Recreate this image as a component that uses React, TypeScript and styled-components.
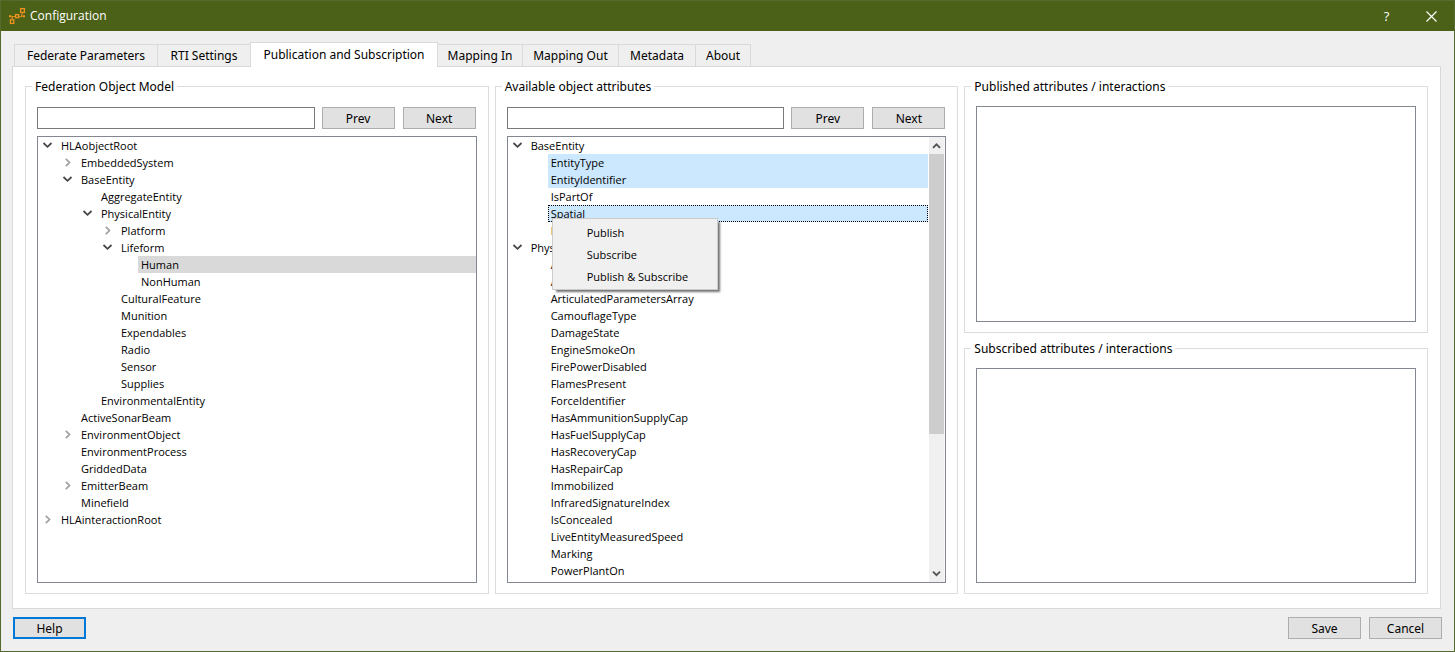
import React from 'react';
import styled, { createGlobalStyle, css } from 'styled-components';

const LABEL_FONT = '"Noto Sans", Tahoma, sans-serif';
const ITEM_FONT = '"Open Sans", "Segoe UI", sans-serif';

const GlobalStyle = createGlobalStyle`
  *, *::before, *::after { box-sizing: border-box; }
  body { margin: 0; background: #efefef; color: #000; font: 12px/16px ${LABEL_FONT}; }
  button, input { font: inherit; color: inherit; }
  ul { list-style: none; margin: 0; padding: 0; }
`;

const Window = styled.div`
  display: flex;
  flex-direction: column;
  min-height: 100vh;
  border: 1px solid #566a2d;
  background: #efefef;
`;

const TitleBar = styled.header`
  display: flex;
  align-items: center;
  height: 30px;
  padding-left: 8px;
  background: #4a6117;
  color: #fff;
`;

const Title = styled.h1`
  flex: 1;
  margin: 0 0 0 4px;
  font: 12px/16px ${ITEM_FONT};
`;

const CaptionButton = styled.button`
  display: flex;
  align-items: center;
  justify-content: center;
  width: 45px;
  height: 30px;
  padding: 0;
  border: 0;
  background: transparent;
  color: #fff;
  font: 13px/16px ${ITEM_FONT};
`;

const Content = styled.main`
  display: flex;
  flex: 1;
  flex-direction: column;
  padding: 11px 13px 0 11px;
`;

const TabBar = styled.div`
  display: flex;
  align-items: flex-end;
  height: 24px;
  padding-left: 2px;
`;

const Tab = styled.button<{ $width: number; $active?: boolean }>`
  width: ${p => p.$width}px;
  height: 22px;
  margin-right: -1px;
  padding: 1px 0 0;
  border: 1px solid #d9d9d9;
  border-bottom: 0;
  background: #efefef;
  white-space: nowrap;
  line-height: 16px;
  ${p => p.$active && css`
    position: relative;
    z-index: 1;
    height: 25px;
    margin-bottom: -1px;
    padding-bottom: 1px;
    background: #fff;
  `}
`;

const TabPanel = styled.section`
  display: grid;
  flex: 1;
  grid-template-columns: repeat(3, minmax(0, 1fr));
  gap: 6px;
  padding: 12px 12px 14px;
  border: 1px solid #d9d9d9;
  background: #fff;
`;

const Column = styled.div`
  display: flex;
  flex-direction: column;
  gap: 8px;
`;

const Group = styled.fieldset`
  display: flex;
  flex: 1;
  flex-direction: column;
  gap: 7px;
  min-width: 0;
  margin: 0;
  padding: 12px 11px 10px;
  border: 1px solid #dcdcdc;
`;

const Legend = styled.legend`
  margin-left: -5px;
  padding: 0 3px;
  line-height: 15px;
`;

const SearchRow = styled.div`
  display: flex;
  gap: 6px;
  padding: 1px 1px 0 0;
`;

const SearchInput = styled.input`
  flex: 1;
  min-width: 0;
  height: 22px;
  padding: 0 4px;
  border: 1px solid #7a7a7a;
  border-radius: 0;
  background: #fff;
`;

const PushButton = styled.button<{ $primary?: boolean }>`
  width: 73px;
  height: 22px;
  padding: 1px 0 0;
  border: ${p => (p.$primary ? '2px solid #0078d7' : '1px solid #adadad')};
  background: #e1e1e1;
  line-height: 16px;
  ${SearchRow} & { margin-left: 1px; }
  ${SearchRow} & + & { margin-left: 2px; }
`;

const ListBox = styled.div`
  display: flex;
  flex: 1;
  border: 1px solid #828790;
  background: #fff;
  font: 11px/17px ${ITEM_FONT};
`;

const Tree = styled.ul`
  flex: 1;
  min-width: 0;
`;

const TreeRow = styled.li<{ $level: number }>`
  position: relative;
  display: flex;
  height: 17px;
  padding-left: ${p => p.$level * 20}px;
`;

const Expander = styled.span`
  display: flex;
  flex: none;
  align-items: center;
  width: 20px;
  height: 17px;
  padding-left: 4px;
`;

type Mark = 'selected' | 'focused' | 'inactive';

const TreeLabel = styled.span<{ $mark?: Mark }>`
  flex: 1;
  padding-left: 3px;
  white-space: nowrap;
  background: ${p => (p.$mark === 'inactive' ? '#d9d9d9' : p.$mark ? '#cce8ff' : 'transparent')};
  ${p => p.$mark === 'focused' && css`
    outline: 1px dotted #000;
    outline-offset: -1px;
  `}
`;

const ContextMenu = styled.div`
  position: absolute;
  z-index: 2;
  top: 13px;
  left: 44px;
  display: flex;
  flex-direction: column;
  width: 166px;
  padding: 2px;
  border: 1px solid #ccc;
  background: #f0f0f0;
  box-shadow: 3px 3px 2px -1px rgba(0, 0, 0, 0.55);
`;

const MenuItem = styled.button`
  height: 22px;
  padding: 0 0 0 32px;
  border: 0;
  background: transparent;
  text-align: left;
`;

const ScrollBar = styled.div`
  display: flex;
  flex-direction: column;
  width: 16px;
  margin-left: 1px;
  border-right: 1px solid #fafafa;
  background: #f0f0f0;
`;

const ScrollArrow = styled.button`
  display: flex;
  align-items: center;
  justify-content: center;
  height: 17px;
  padding: 0;
  border: 0;
  background: transparent;
`;

const ScrollTrack = styled.div`
  flex: 1;
`;

const ScrollThumb = styled.div`
  height: calc(100% * 15 / 22);
  background: #cdcdcd;
`;

const Footer = styled.footer`
  display: flex;
  gap: 8px;
  padding: 8px 0 12px 1px;
  margin-right: -1px;
`;

const Spacer = styled.span`
  flex: 1;
`;

const Logo = () => (
  <svg width="17" height="18" viewBox="0 0 17 18" fill="none" stroke="#f0921e" aria-hidden="true">
    <rect x="11.6" y="1.6" width="3.8" height="3.8" strokeWidth="1.3" />
    <rect x="6.6" y="7.6" width="3" height="3" strokeWidth="1.3" />
    <rect x="1.4" y="12.8" width="3.4" height="3.6" strokeWidth="1.3" />
    <path d="M1 9.2H3L4 9.9L6.6 9M3.2 12.8V10M9.6 9L11.6 9.9L13 9.2H15M13.2 5.4V7L12 9.4" />
    <path d="M0 8.2h2v2h-2zM14 8.2h2v2h-2z" fill="#f0921e" stroke="none" />
  </svg>
);

const Chevron = ({ open }: { open: boolean }) => (
  <svg width="11" height="11" viewBox="0 0 11 11" fill="none" strokeWidth={open ? 1.8 : 1.7} aria-hidden="true">
    {open ? <path d="M1.5 3L5.5 6.8L9.5 3" stroke="#484848" /> : <path d="M3.8 1.8L7.5 5.5L3.8 9.2" stroke="#a0a0a0" />}
  </svg>
);

const ScrollChevron = ({ up }: { up?: boolean }) => (
  <svg width="9" height="9" viewBox="0 0 9 9" fill="none" stroke="#555" strokeWidth="1.9" aria-hidden="true">
    <path d={up ? 'M1 6.8L4.5 3.3L8 6.8' : 'M1 2.7L4.5 6.2L8 2.7'} />
  </svg>
);

interface Item {
  name: string;
  level: number;
  open?: boolean;
  mark?: Mark;
  menu?: boolean;
}

const leaves = (level: number, names: string[]): Item[] => names.map(name => ({ name, level }));

const objectModel: Item[] = [
  { name: 'HLAobjectRoot', level: 0, open: true },
  { name: 'EmbeddedSystem', level: 1, open: false },
  { name: 'BaseEntity', level: 1, open: true },
  { name: 'AggregateEntity', level: 2 },
  { name: 'PhysicalEntity', level: 2, open: true },
  { name: 'Platform', level: 3, open: false },
  { name: 'Lifeform', level: 3, open: true },
  { name: 'Human', level: 4, mark: 'inactive' },
  { name: 'NonHuman', level: 4 },
  ...leaves(3, ['CulturalFeature', 'Munition', 'Expendables', 'Radio', 'Sensor', 'Supplies']),
  { name: 'EnvironmentalEntity', level: 2 },
  { name: 'ActiveSonarBeam', level: 1 },
  { name: 'EnvironmentObject', level: 1, open: false },
  { name: 'EnvironmentProcess', level: 1 },
  { name: 'GriddedData', level: 1 },
  { name: 'EmitterBeam', level: 1, open: false },
  { name: 'Minefield', level: 1 },
  { name: 'HLAinteractionRoot', level: 0, open: false },
];

const attributes: Item[] = [
  { name: 'BaseEntity', level: 0, open: true },
  { name: 'EntityType', level: 1, mark: 'selected' },
  { name: 'EntityIdentifier', level: 1, mark: 'selected' },
  { name: 'IsPartOf', level: 1 },
  { name: 'Spatial', level: 1, mark: 'focused', menu: true },
  { name: 'RelativeSpatial', level: 1 },
  { name: 'PhysicalEntity', level: 0, open: true },
  ...leaves(1, [
    'AcousticSignatureIndex', 'AlternateEntityType', 'ArticulatedParametersArray', 'CamouflageType',
    'DamageState', 'EngineSmokeOn', 'FirePowerDisabled', 'FlamesPresent', 'ForceIdentifier',
    'HasAmmunitionSupplyCap', 'HasFuelSupplyCap', 'HasRecoveryCap', 'HasRepairCap', 'Immobilized',
    'InfraredSignatureIndex', 'IsConcealed', 'LiveEntityMeasuredSpeed', 'Marking', 'PowerPlantOn',
  ]),
];

const tabs = [
  { name: 'Federate Parameters', width: 144 },
  { name: 'RTI Settings', width: 94 },
  { name: 'Publication and Subscription', width: 188, active: true },
  { name: 'Mapping In', width: 86 },
  { name: 'Mapping Out', width: 97 },
  { name: 'Metadata', width: 78 },
  { name: 'About', width: 56 },
];

const TreeView = ({ items, label }: { items: Item[]; label: string }) => (
  <Tree role="tree" aria-label={label}>
    {items.map(item => (
      <TreeRow key={item.name} $level={item.level} role="treeitem" aria-expanded={item.open} aria-selected={!!item.mark}>
        <Expander>{item.open !== undefined && <Chevron open={item.open} />}</Expander>
        <TreeLabel $mark={item.mark}>{item.name}</TreeLabel>
        {item.menu && (
          <ContextMenu role="menu">
            <MenuItem role="menuitem">Publish</MenuItem>
            <MenuItem role="menuitem">Subscribe</MenuItem>
            <MenuItem role="menuitem">Publish &amp; Subscribe</MenuItem>
          </ContextMenu>
        )}
      </TreeRow>
    ))}
  </Tree>
);

const Search = ({ label }: { label: string }) => (
  <SearchRow>
    <SearchInput type="text" aria-label={label} />
    <PushButton>Prev</PushButton>
    <PushButton>Next</PushButton>
  </SearchRow>
);

export default function App() {
  return (
    <Window>
      <GlobalStyle />
      <TitleBar>
        <Logo />
        <Title>Configuration</Title>
        <CaptionButton aria-label="Help">?</CaptionButton>
        <CaptionButton aria-label="Close">
          <svg width="11" height="11" viewBox="0 0 11 11" stroke="#fff" strokeWidth="1.2" aria-hidden="true">
            <path d="M0.5 0.5L10.5 10.5M10.5 0.5L0.5 10.5" />
          </svg>
        </CaptionButton>
      </TitleBar>
      <Content>
        <TabBar role="tablist">
          {tabs.map(tab => (
            <Tab key={tab.name} role="tab" aria-selected={!!tab.active} $width={tab.width} $active={tab.active}>
              {tab.name}
            </Tab>
          ))}
        </TabBar>
        <TabPanel role="tabpanel">
          <Column>
            <Group>
              <Legend>Federation Object Model</Legend>
              <Search label="Search object model" />
              <ListBox><TreeView items={objectModel} label="Federation Object Model" /></ListBox>
            </Group>
          </Column>
          <Column>
            <Group>
              <Legend>Available object attributes</Legend>
              <Search label="Search attributes" />
              <ListBox>
                <TreeView items={attributes} label="Available object attributes" />
                <ScrollBar>
                  <ScrollArrow aria-label="Scroll up"><ScrollChevron up /></ScrollArrow>
                  <ScrollTrack><ScrollThumb /></ScrollTrack>
                  <ScrollArrow aria-label="Scroll down"><ScrollChevron /></ScrollArrow>
                </ScrollBar>
              </ListBox>
            </Group>
          </Column>
          <Column>
            <Group>
              <Legend>Published attributes / interactions</Legend>
              <ListBox />
            </Group>
            <Group>
              <Legend>Subscribed attributes / interactions</Legend>
              <ListBox />
            </Group>
          </Column>
        </TabPanel>
        <Footer>
          <PushButton $primary>Help</PushButton>
          <Spacer />
          <PushButton>Save</PushButton>
          <PushButton>Cancel</PushButton>
        </Footer>
      </Content>
    </Window>
  );
}
